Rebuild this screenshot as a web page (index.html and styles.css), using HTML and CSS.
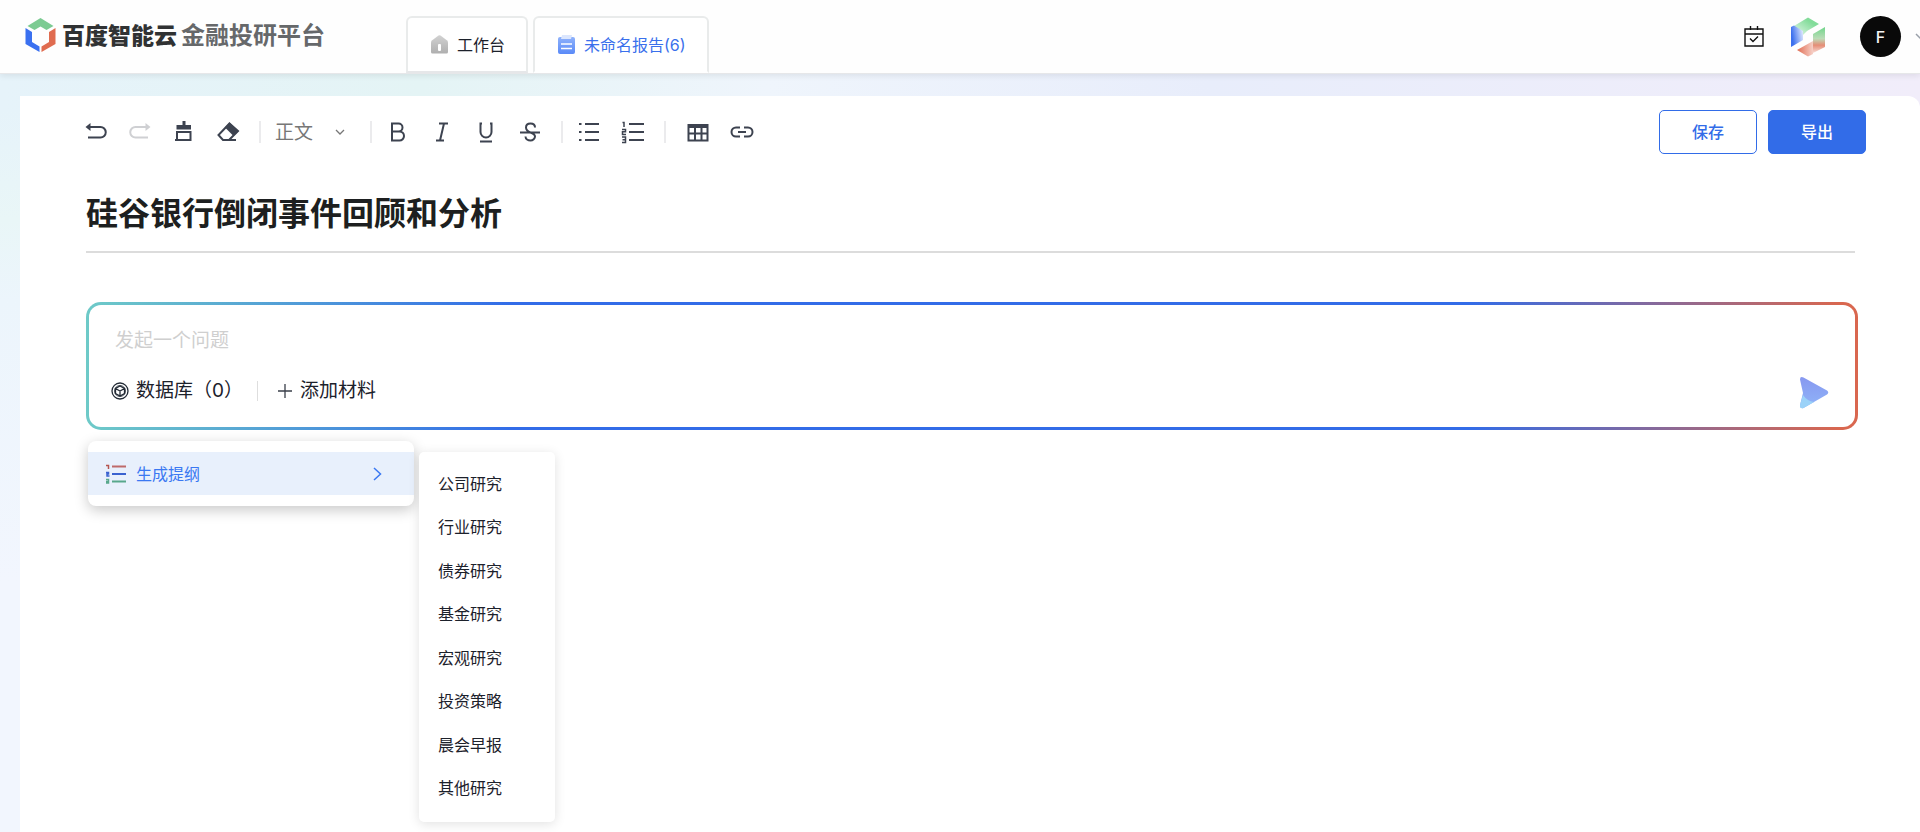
FILE: index.html
```html
<!DOCTYPE html>
<html lang="zh-CN">
<head>
<meta charset="utf-8">
<title>百度智能云 金融投研平台</title>
<link rel="stylesheet" href="styles.css">
</head>
<body>
<header class="header">
  <a class="brand" href="#">
    <svg class="brand-mark" viewBox="0 0 31 35" aria-hidden="true">
      <path fill="#7ccb92" d="M15.500 0 28.500 8 21.500 12 15.500 8.500 9.500 12 2.500 8z"/>
      <path fill="#3a70f0" d="M.5 10 7 14v10l7.500 4.500V34L.5 26z"/>
      <path fill="#e06c50" d="M30.500 10 24 14v10l-7.500 4.500V34l14-8z"/>
    </svg>
    <span class="brand-name">百度智能云</span>
    <span class="brand-product">金融投研平台</span>
  </a>
  <nav class="tabs">
    <a class="tab" href="#">
      <svg class="tab-icon" viewBox="0 0 17 19" aria-hidden="true">
        <defs><linearGradient id="home" x1="0" y1="0" x2="0" y2="1"><stop stop-color="#d2d2d2"/><stop offset="1" stop-color="#afafaf"/></linearGradient></defs>
        <path fill="url(#home)" d="M7.500.5q1-.7 2 0l6.300 4.800q1.200 1 1.200 2.200V17q0 1.500-1.500 1.500h-14Q0 18.500 0 17V7.500q0-1.200 1.200-2.200z"/>
        <rect x="7" y="9" width="3" height="7" rx="1" fill="#fff"/>
      </svg>
      <span>工作台</span>
    </a>
    <a class="tab tab-active" href="#" aria-current="page">
      <svg class="tab-icon" viewBox="0 0 17 19" aria-hidden="true">
        <defs><linearGradient id="doc" x1="0" y1="0" x2="0" y2="1"><stop stop-color="#8fb2fb"/><stop offset="1" stop-color="#5a8af8"/></linearGradient></defs>
        <rect y="2" width="17" height="17" rx="2" fill="url(#doc)"/>
        <path fill="#dbe6fe" d="M4 0h10l-1 4H3z"/>
        <path stroke="#fff" stroke-width="1.500" d="M3 9h11M3 13.500h11"/>
      </svg>
      <span>未命名报告(6)</span>
    </a>
  </nav>
  <div class="account">
    <button class="icon-button" type="button" aria-label="日程">
      <svg width="20" height="21" viewBox="0 0 20 21" fill="none" stroke="#111" stroke-width="1.400" aria-hidden="true">
        <path d="M1 3h18v17H1zM1 8h18M6.500 0v4M13.500 0v4M6 12.500l3 3 5-5"/>
      </svg>
    </button>
    <button class="icon-button cube" type="button" aria-label="云服务">
      <svg width="36" height="40" viewBox="0 0 36 40" aria-hidden="true">
        <defs>
          <linearGradient id="cg" x1="1" y1="0" x2="0" y2="1"><stop offset=".3" stop-color="#83dc9a"/><stop offset="1" stop-color="#e6f8ea"/></linearGradient>
          <linearGradient id="cb" x1="0" y1=".6" x2="1" y2=".3"><stop offset=".1" stop-color="#3c70ee"/><stop offset="1" stop-color="#dfe8fd"/></linearGradient>
          <linearGradient id="cr" x1="0" y1="0" x2="0" y2="1"><stop stop-color="#6fd58a"/><stop offset=".45" stop-color="#bcdcb8"/><stop offset=".7" stop-color="#e58d76"/><stop offset="1" stop-color="#f8dcd6"/></linearGradient>
          <linearGradient id="co" x1="0" y1="0" x2="1" y2="0"><stop stop-color="#e06c52"/><stop offset="1" stop-color="#f6cfc6"/></linearGradient>
        </defs>
        <path fill="url(#cg)" d="M18 .5 29 7 17 14l-4 4-9-9z"/>
        <path fill="url(#cb)" d="M1 10 4 8.500l9 5.500v9L1 30z"/>
        <path fill="url(#cr)" d="M35 10v20l-12 6V17z"/>
        <path fill="url(#co)" d="M7 33l16-9v13l-5 2.500z"/>
      </svg>
    </button>
    <button class="avatar" type="button">F</button>
    <svg class="account-more" width="12" height="8" viewBox="0 0 12 8" fill="none" stroke="#9aa0aa" stroke-width="1.500" aria-hidden="true"><path d="M1 1l5 5 5-5"/></svg>
  </div>
</header>

<main class="panel">
  <div class="toolbar">
    <div class="tools">
      <div class="tool-group">
        <button class="tool" type="button" aria-label="撤销"><svg viewBox="0 0 24 24"><path d="M5 7h11.500a5 5 0 0 1 0 10.500H4"/><path class="solid" d="M6.500 3v8L1.500 7z"/></svg></button>
        <button class="tool tool-off" type="button" aria-label="重做" disabled><svg viewBox="0 0 24 24"><path d="M19 7H7.500a5 5 0 0 0 0 10.500H20"/><path class="solid" d="M17.500 3v8l5-4z"/></svg></button>
        <button class="tool" type="button" aria-label="格式刷"><svg viewBox="0 0 24 24"><path class="solid" d="M10.500 1h3v4H19v4.500H4.500V5h6z"/><path d="M5 12h13.500v8H5zM5 14v6H3"/></svg></button>
        <button class="tool" type="button" aria-label="清除格式"><svg viewBox="0 0 24 24"><path d="M13.500 3.500 22 11l-9 9H7l-4.500-5zM7 20h13"/><path class="solid" d="M13.500 2.500 22.500 11l-5 5L9 7.500z"/></svg></button>
      </div>
      <label class="style-pick">
        <select aria-label="段落样式"><option>正文</option></select>
        <svg width="10" height="7" viewBox="0 0 10 7" aria-hidden="true"><path d="M1 1l4 4 4-4"/></svg>
      </label>
      <div class="tool-group">
        <button class="tool" type="button" aria-label="加粗"><svg viewBox="0 0 24 24"><path d="M6 3.500h6.500a4 4 0 0 1 0 8H6zM6 11.500h7.500a4.500 4.500 0 0 1 0 9H6z"/></svg></button>
        <button class="tool" type="button" aria-label="斜体"><svg viewBox="0 0 24 24"><path d="M9 3.500h9M6 20.500h8M14 3.500 10 20.500"/></svg></button>
        <button class="tool" type="button" aria-label="下划线"><svg viewBox="0 0 24 24"><path d="M5.500 3.500H8M16 3.500h2.500M6.500 3.500V12a5.500 5.500 0 0 0 11 0V3.500M6 21.500h12"/></svg></button>
        <button class="tool" type="button" aria-label="删除线"><svg viewBox="0 0 24 24"><path d="M2 12.500h20M17 7.500c0-2.500-2-4-4.500-4S8 5 8 7.500s2 4 4.500 5S17 14.500 17 16.500s-2 4-4.500 4-5-1.500-5-4"/></svg></button>
      </div>
      <div class="tool-group">
        <button class="tool" type="button" aria-label="无序列表"><svg viewBox="0 0 24 24"><path d="M8 4h14M8 12h14M8 20h14M2 4h2.500M2 12h2.500M2 20h2.500"/></svg></button>
        <button class="tool" type="button" aria-label="有序列表"><svg viewBox="0 0 24 24"><path d="M8 4h15M8 12h15M8 20h15"/><path class="thin" d="M1.500 2.500H3V7M1 9.500h3.500v2.300H1.500V14.500H5M1 17h3.500v5.500H1M1.500 19.700h3"/></svg></button>
      </div>
      <div class="tool-group tool-group-wide">
        <button class="tool" type="button" aria-label="表格"><svg viewBox="0 0 24 24"><path d="M2.500 5h19v15.500h-19zM2.500 13.500h19M9 6v14M15.500 6v14"/><path class="solid" d="M2 4h20v4H2z"/></svg></button>
        <button class="tool" type="button" aria-label="链接"><svg viewBox="0 0 24 24"><path d="M10 7.500H6a4.500 4.500 0 0 0 0 9h4M14 7.500h4a4.500 4.500 0 0 1 0 9h-4M8 12h8"/></svg></button>
      </div>
    </div>
    <div class="actions">
      <button class="btn" type="button">保存</button>
      <button class="btn btn-primary" type="button">导出</button>
    </div>
  </div>

  <h1 class="title">硅谷银行倒闭事件回顾和分析</h1>

  <form class="composer">
    <input class="question" type="text" placeholder="发起一个问题" aria-label="发起一个问题">
    <div class="composer-row">
      <div class="sources">
        <button class="source" type="button">
          <svg width="18" height="18" viewBox="0 0 18 18" fill="none" stroke="#222a35" stroke-width="1.300" aria-hidden="true"><circle cx="9" cy="9" r="8"/><path d="M9 4l4.500 2.500v5L9 14l-4.500-2.500v-5zM4.500 6.500 9 9l4.500-2.500M9 9v5"/><circle cx="9" cy="9" r="5.500" stroke-width=".8"/></svg>
          <span>数据库（0）</span>
        </button>
        <button class="source source-add" type="button">
          <svg width="16" height="16" viewBox="0 0 16 16" fill="none" stroke="#3a3f4a" stroke-width="1.300" aria-hidden="true"><path d="M8 1v14M1 8h14"/></svg>
          <span>添加材料</span>
        </button>
      </div>
      <button class="send" type="submit" aria-label="发送">
        <svg width="30" height="33" viewBox="0 0 30 33" aria-hidden="true">
          <defs>
            <linearGradient id="sa" x1="0" y1="0" x2="0" y2="1"><stop stop-color="#8798f0"/><stop offset="1" stop-color="#8fb4f8"/></linearGradient>
          </defs>
          <path fill="url(#sa)" d="M1 3.500Q1 0 4.500 1.500L28 14.500q2.500 2 0 4L4.500 32Q.5 33 1 29l3-12z"/>
          <path fill="#9bd2f8" d="M4 19q4 6 11 7L4.500 32Q.5 33 1 29z"/>
        </svg>
      </button>
    </div>
  </form>

  <div class="menus">
    <div class="menu">
      <button class="menu-item" type="button" aria-expanded="true">
        <svg width="20" height="20" viewBox="0 0 20 20" fill="none" stroke-width="2" aria-hidden="true">
          <path stroke="#bf6a6a" d="M6 2.500h14"/><path stroke="#3a62d0" d="M6 10h14"/><path stroke="#58a88c" d="M6 17.500h14"/>
          <path stroke="#b5554f" stroke-width="1.500" d="M0 1.500h2.500V5"/><path stroke="#3a62d0" stroke-width="1.500" d="M0 8.500h2.500V10H1v2h2.500"/><path stroke="#58a88c" stroke-width="1.500" d="M0 15.500h2.500V19H0M0 17.500h2.500"/>
        </svg>
        <span class="menu-label">生成提纲</span>
        <svg width="9" height="14" viewBox="0 0 9 14" fill="none" stroke="#3a78f2" stroke-width="1.500" aria-hidden="true"><path d="M1 1l6.500 6L1 13"/></svg>
      </button>
    </div>
    <div class="submenu">
      <button type="button">公司研究</button>
      <button type="button">行业研究</button>
      <button type="button">债券研究</button>
      <button type="button">基金研究</button>
      <button type="button">宏观研究</button>
      <button type="button">投资策略</button>
      <button type="button">晨会早报</button>
      <button type="button">其他研究</button>
    </div>
  </div>
</main>
</body>
</html>
```
FILE: styles.css
```css
* { box-sizing: border-box; }

body {
  margin: 0;
  min-height: 100vh;
  display: flex;
  flex-direction: column;
  overflow-x: hidden;
  font: 16px/24px Inter, "Noto Sans CJK SC", sans-serif;
  color: #1c212b;
  background:
    linear-gradient(90deg, #e6f3fa 0, #e4f4f5 22%, #eff5fc 40%, #e8edfb 63%, #f1edfa 100%) 0 0 / 100% 110px no-repeat,
    linear-gradient(180deg, #e6f3fa 110px, #e9f6f7 220px, #ecf5fc 300px, #f2f6fe 70%);
}

button, input, select { font: inherit; color: inherit; }
button { padding: 0; border: 0; background: none; cursor: pointer; }
a { color: inherit; text-decoration: none; }
svg { display: block; flex: none; }

.header {
  position: relative;
  display: flex;
  align-items: flex-end;
  height: 74px;
  background: #fefefe;
  border-bottom: 1px solid #e6e7e9;
  box-shadow: 0 2px 6px rgba(0, 0, 0, .08);
}

.brand {
  display: flex;
  align-items: center;
  align-self: stretch;
  width: 406px;
  padding: 0 0 2px 25px;
  font-size: 23px;
  line-height: 32px;
}
.brand-mark { width: 31px; height: 35px; margin-right: 6px; }
.brand-name { font-weight: 900; color: #303233; }
.brand-product { margin-left: 4px; font-size: 24px; font-weight: 600; color: #66686a; }

.tabs { display: flex; gap: 5px; }
.tab {
  display: flex;
  align-items: center;
  gap: 9px;
  height: 57px;
  padding: 0 21px 0 23px;
  border: 2px solid #e9ebeb;
  border-bottom-color: #e6e7e9;
  border-radius: 6px 6px 0 0;
  background: #fff;
}
.tab-active { border-bottom-color: transparent; color: #3a70ec; }
.tab-icon { width: 17px; height: 19px; }

.account {
  display: flex;
  align-items: center;
  align-self: stretch;
  margin-left: auto;
  margin-right: -7px;
}
.cube { margin: 0 34px 0 26px; }
.avatar {
  width: 41px;
  height: 41px;
  border-radius: 50%;
  background: #090909;
  color: #f4f4f4;
  font-weight: 500;
}
.account-more { margin-left: 14px; }

.panel {
  flex: 1;
  margin: 22px 0 0 20px;
  padding: 14px 54px 10px 66px;
  border-radius: 0 12px 0 0;
  background: #fff;
}

.toolbar { display: flex; justify-content: space-between; }
.tools { display: flex; align-items: center; margin-left: -2px; }
.tool-group, .style-pick { display: flex; align-items: center; gap: 20px; }
.tool-group + .tool-group, .style-pick, .style-pick + .tool-group {
  position: relative;
  margin-left: 19px;
  padding-left: 16px;
}
.style-pick + .tool-group { margin-left: 25px; }
.tool-group + .tool-group-wide { padding-left: 22px; }
.tool-group + .tool-group::before, .style-pick::before, .style-pick + .tool-group::before {
  content: "";
  position: absolute;
  left: 0;
  width: 2px;
  height: 22px;
  background: #ebebed;
}
.tool { width: 24px; height: 24px; }
.tool svg { width: 24px; height: 24px; fill: none; stroke: #3d4350; stroke-width: 2; }
.tool .solid { fill: #3d4350; stroke: none; }
.tool .thin { stroke-width: 1.5; }
.tool-off svg { stroke: #cfd0d3; }
.tool-off .solid { fill: #cfd0d3; }
.style-pick select {
  appearance: none;
  width: 40px;
  padding: 2px 0 0;
  border: 0;
  background: none;
  font-size: 19px;
  line-height: 28px;
  color: #777;
}
.style-pick svg { fill: none; stroke: #777; stroke-width: 1.3; }

.actions { display: flex; gap: 11px; }
.btn {
  width: 98px;
  height: 44px;
  border: 1px solid #326ce8;
  border-radius: 5px;
  color: #326ce8;
  font-weight: 500;
}
.btn-primary { background: #326ce8; color: #fff; }

.title {
  margin: 36px 11px 0 0;
  padding-bottom: 13px;
  border-bottom: 2px solid #dcdcdc;
  font-size: 32px;
  line-height: 48px;
  font-weight: 700;
  color: #1d1f20;
}

.composer {
  margin: 49px 8px 0 0;
  padding: 19px 26px 18px 22px;
  border: 3px solid transparent;
  border-radius: 15px;
  background:
    linear-gradient(#fff, #fff) padding-box,
    linear-gradient(90deg, #6ecac8 0, #326ce8 24%, #326ce8 78%, #d9674f 99%) border-box;
}
.question {
  display: block;
  width: 100%;
  height: 32px;
  padding: 0 4px;
  border: 0;
  outline: 0;
  background: none;
  font-size: 19px;
}
.question::placeholder { color: #cfcfcf; opacity: 1; }
.composer-row { display: flex; justify-content: space-between; align-items: center; margin-top: 16px; }
.sources { display: flex; align-items: center; height: 32px; font-size: 19px; }
.source { display: flex; align-items: center; gap: 7px; }
.source-add { margin-left: 14px; padding-left: 19px; border-left: 1px solid #dedede; line-height: 20px; }
.send { padding-top: 4px; }

.menus { display: flex; align-items: flex-start; gap: 5px; margin: 11px 0 0 2px; }
.menu {
  width: 326px;
  padding: 11px 0;
  border-radius: 8px;
  background: #fff;
  box-shadow: 0 4px 14px rgba(0, 0, 0, .22);
}
.menu-item {
  display: flex;
  align-items: center;
  width: 100%;
  height: 43px;
  padding: 0 32px 0 18px;
  background: #e8f0fc;
  color: #3a78f2;
}
.menu-label { flex: 1; margin-left: 10px; text-align: left; }
.submenu {
  display: grid;
  grid-auto-rows: 1fr;
  width: 136px;
  min-height: 370px;
  margin-top: 11px;
  padding: 10px 19px 12px;
  border-radius: 5px;
  background: #fff;
  box-shadow: 0 2px 12px rgba(0, 0, 0, .12);
}
.submenu button { text-align: left; }
```
